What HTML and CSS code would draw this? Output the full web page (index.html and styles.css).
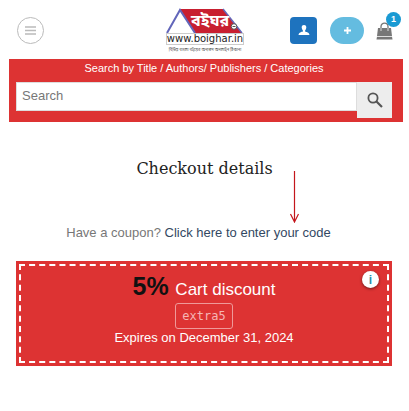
FILE: index.html
```html
<!DOCTYPE html>
<html lang="en">
<head>
  <meta charset="utf-8">
  <meta name="viewport" content="width=device-width, initial-scale=1">
  <title>Checkout</title>
  <link rel="stylesheet" href="styles.css">
</head>
<body>
  <header class="site-header">
    <button class="menu-btn" type="button" aria-label="Menu">
      <svg width="11" height="9" viewBox="0 0 11 9"><path d="M0 1h11M0 4.5h11M0 8h11" stroke="#bbb" stroke-width="1.3"/></svg>
    </button>

    <a class="logo" href="#" aria-label="boighar.in">
      <svg width="80" height="46" viewBox="0 0 80 46">
        <path d="M15 1H58L77 25H29Z" fill="#c81f30"/>
        <path d="M2 25L15 2L30 25" fill="#fff" stroke="#6266ba" stroke-width="2"/>
        <path d="M58 1L77 25" stroke="#6266ba" stroke-width="1.5"/>
        <rect x="1.500" y="25.500" width="77" height="11" fill="#fff" stroke="#ccc" stroke-width="1"/>
        <text class="logo-name" x="26" y="18">বইঘর</text>
        <circle cx="69" cy="18.500" r="2.800" fill="#fff" stroke="#555" stroke-width="1"/>
        <path d="M67.500 18.500h3" stroke="#555"/>
        <text class="logo-url" x="40" y="34" text-anchor="middle">www.boighar.in</text>
        <text class="logo-tag" x="40" y="43" text-anchor="middle">বিভিন্ন বাংলা বইয়ের অন্যতম অনলাইন ঠিকানা</text>
      </svg>
    </a>

    <div class="header-actions">
      <button class="user-btn" type="button" aria-label="Account">
        <svg width="12" height="12" viewBox="0 0 12 12"><path d="M6 0C4.300 0 3.500 1.200 3.700 2.800C3.800 4 4.300 4.900 4.900 5.500V6.600C3.500 7.100 1 7.400.5 10H11.500C11 7.400 8.500 7.100 7.100 6.600V5.500C7.700 4.900 8.200 4 8.300 2.800C8.500 1.200 7.700 0 6 0Z" fill="#fff"/></svg>
      </button>
      <button class="add-btn" type="button" aria-label="Add">
        <svg width="7" height="7" viewBox="0 0 7 7"><path d="M3.500 0V7M0 3.500H7" stroke="#fff" stroke-width="1.800"/></svg>
      </button>
      <a class="cart" href="#" aria-label="Cart">
        <svg width="17" height="18" viewBox="0 0 17 18">
          <path d="M2 6H15L16 14H1Z" fill="#777"/>
          <path d="M1 14.800H16L16.500 17.500H.5Z" fill="#777"/>
          <path d="M5 8V4.500C5 0 12 0 12 4.500V8" fill="none" stroke="#777" stroke-width="1.3"/>
          <path d="M5 6V9M12 6V9" stroke="#ddd"/>
        </svg>
        <span class="cart-count">1</span>
      </a>
    </div>
  </header>

  <form class="search-bar">
    <label class="search-label" for="search">Search by Title / Authors/ Publishers / Categories</label>
    <div class="search-row">
      <input class="search-input" id="search" type="text" placeholder="Search">
      <button class="search-btn" type="submit" aria-label="Search">
        <svg width="16" height="16" viewBox="0 0 16 16" fill="none" stroke="#555"><circle cx="6" cy="6" r="4.600" stroke-width="1.800"/><path d="M9.500 9.500L15 15" stroke-width="2.200"/></svg>
      </button>
    </div>
  </form>

  <main>
    <h1 class="page-title">Checkout details</h1>
    <p class="coupon-toggle">
      Have a coupon? <a href="#coupon">Click here to enter your code</a>
      <svg class="arrow" width="10" height="52" viewBox="0 0 10 52" fill="none" stroke="#c4161c" stroke-width="1.200"><path d="M5.500 0V51M1.500 43L5.500 51L9.500 43"/></svg>
    </p>

    <section class="coupon" id="coupon">
      <button class="info-btn" type="button" aria-label="Details">i</button>
      <div class="coupon-body">
        <div class="discount"><strong>5%</strong> Cart discount</div>
        <code class="coupon-code">extra5</code>
        <div class="expires">Expires on December 31, 2024</div>
      </div>
    </section>
  </main>
</body>
</html>
```
FILE: styles.css
```css
* {
  box-sizing: border-box;
}

body {
  margin: 0;
  background: #fff;
  font-family: "Liberation Sans", Arial, sans-serif;
}

button {
  display: flex;
  align-items: center;
  justify-content: center;
  padding: 0;
  border: none;
}

.site-header {
  display: grid;
  grid-template-columns: 1fr auto 1fr;
  align-items: center;
  height: 59px;
  padding: 2px 16px 0 17px;
}

.menu-btn {
  width: 27px;
  height: 27px;
  border: 1px solid #bbb;
  border-radius: 50%;
  background: #fff;
}

.logo svg {
  display: block;
}

.logo-name {
  font: bold 16px "Noto Sans Bengali", "Noto Sans", sans-serif;
  fill: #fff;
}

.logo-url {
  font: 10px "DejaVu Sans", sans-serif;
  fill: #222;
}

.logo-tag {
  font: 4px "Noto Sans Bengali", "Noto Sans", sans-serif;
  fill: #444;
}

.header-actions {
  display: flex;
  align-items: center;
  justify-content: flex-end;
}

.user-btn {
  width: 27px;
  height: 27px;
  margin-right: 13px;
  border-radius: 4px;
  background: #1e73be;
}

.add-btn {
  width: 34px;
  height: 27px;
  margin-right: 12px;
  border-radius: 14px;
  background: #64bce0;
}

.cart {
  position: relative;
}

.cart svg {
  display: block;
}

.cart-count {
  position: absolute;
  top: -10px;
  right: -8px;
  width: 15px;
  border-radius: 50%;
  background: #1a9ad3;
  color: #fff;
  font-size: 9px;
  font-weight: bold;
  line-height: 15px;
  text-align: center;
}

.search-bar {
  margin: 0 6px 0 9px;
  padding: 0 11px 4px 7px;
  background: #dd3333;
}

.search-label {
  display: block;
  padding-bottom: 5px;
  color: #fff;
  font-size: 11px;
  line-height: 18px;
  text-align: center;
}

.search-row {
  display: flex;
  align-items: flex-start;
}

.search-input {
  flex: 1;
  min-width: 0;
  height: 29px;
  padding: 0 5px 2px;
  border: 1px solid #ddd;
  border-radius: 0;
  background: #fff;
  font: 13px "Liberation Sans", Arial, sans-serif;
}

.search-input::placeholder {
  color: #777;
}

.search-btn {
  width: 35px;
  height: 36px;
  background: #ededed;
}

.page-title {
  margin: 36px 0 0;
  color: #222;
  font: 16px/22px "DejaVu Serif", serif;
  text-align: center;
}

.coupon-toggle {
  position: relative;
  width: fit-content;
  margin: 43px auto 18px;
  padding-right: 12px;
  color: #777;
  font-size: 13px;
  line-height: 20px;
}

.coupon-toggle a {
  color: #334862;
  text-decoration: none;
}

.arrow {
  position: absolute;
  right: 44px;
  bottom: 20px;
}

.coupon {
  position: relative;
  margin: 0 17px 0 16px;
  padding: 3px;
  background: #dd3333;
  color: #fff;
  text-align: center;
}

.coupon-body {
  display: flex;
  flex-direction: column;
  align-items: center;
  padding: 10px 0 14px;
  border: 2px dashed #fff;
}

.discount {
  font-size: 17px;
  line-height: 26px;
}

.discount strong {
  margin-right: 2px;
  color: #111;
  font-size: 25px;
  line-height: 20px;
}

.coupon-code {
  padding: 0 6px;
  border: 1px solid #ef9999;
  border-radius: 3px;
  color: #f5b5b5;
  font: 12px/24px "DejaVu Sans Mono", monospace;
}

.expires {
  font-size: 13px;
  line-height: 18px;
}

.info-btn {
  position: absolute;
  top: 10px;
  right: 13px;
  width: 17px;
  height: 17px;
  border-radius: 50%;
  background: #fff;
  box-shadow: 0 1px 3px rgba(0, 0, 0, 0.5);
  color: #2a8fa8;
  font: bold 12px "Liberation Sans", Arial, sans-serif;
}
```
